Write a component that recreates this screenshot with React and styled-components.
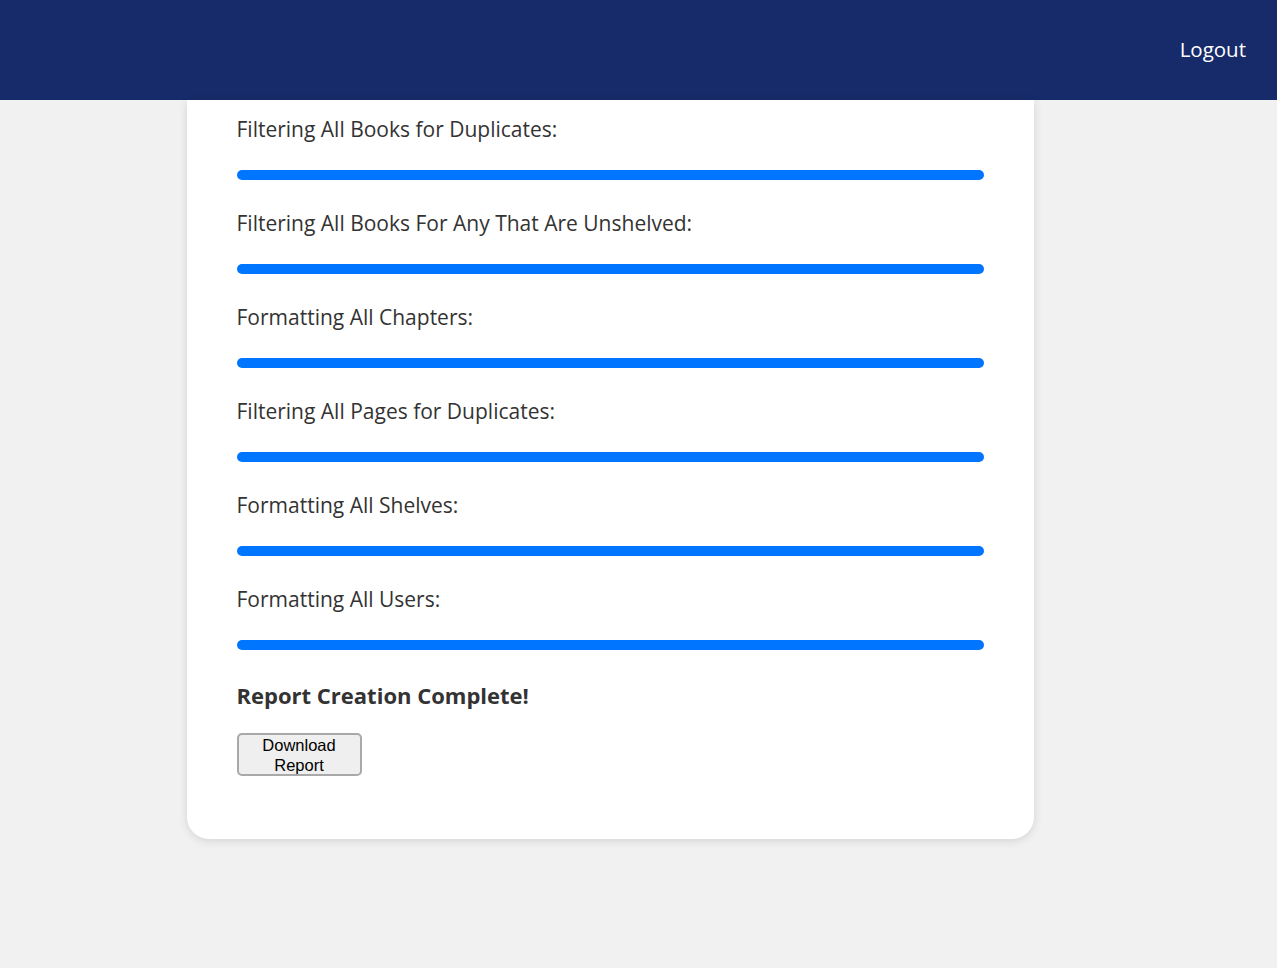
import React from "react";
import styled, { createGlobalStyle } from "styled-components";

const Global = createGlobalStyle`
  html, body { margin: 0; padding: 0; background: #f1f1f1; }
  body { font-family: "Open Sans", "Noto Sans", sans-serif; color: #333; }
`;

const Header = styled.header`
  height: 100px;
  background: #172b6a;
  display: flex;
  align-items: center;
  justify-content: flex-end;
  padding: 0 31px 2px;
  box-sizing: border-box;
`;

const HeaderLink = styled.a`
  color: #fff;
  font-family: "Open Sans", sans-serif;
  font-size: 20.5px;
  text-decoration: none;
  cursor: pointer;
`;

const Main = styled.main`
  display: flex;
  justify-content: center;
  padding-bottom: 60px;
`;

const Card = styled.section`
  width: 847px;
  box-sizing: border-box;
  margin-left: -57px;
  background: #fff;
  border-radius: 0 0 22px 22px;
  box-shadow: 0 2px 10px rgba(0, 0, 0, 0.12);
  padding: 14px 50px 63px;
`;

const Step = styled.div`
  display: flex;
  flex-direction: column;
`;

const StepLabel = styled.div`
  font-size: 21px;
  line-height: 30px;
  color: #333;
  margin-bottom: 26px;
`;

const Bar = styled.div`
  height: 10px;
  border-radius: 5px;
  background: #0075ff;
  margin-bottom: 28px;
`;

const Done = styled.h3`
  margin: 1px 0 21px;
  font-size: 22px;
  line-height: 33px;
  font-weight: 700;
  color: #333;
`;

const Button = styled.button`
  width: 125px;
  height: 43px;
  box-sizing: border-box;
  font-family: "Liberation Sans", Arial, sans-serif;
  font-size: 16.5px;
  line-height: 19.5px;
  padding: 1px 6px 0;
  color: #000;
  background: #efefef;
  border: 2px solid #a9a9a9;
  border-radius: 5px;
  cursor: pointer;
`;

const steps = [
  "Filtering All Books for Duplicates:",
  "Filtering All Books For Any That Are Unshelved:",
  "Formatting All Chapters:",
  "Filtering All Pages for Duplicates:",
  "Formatting All Shelves:",
  "Formatting All Users:",
];

export default function App() {
  return (
    <>
      <Global />
      <Header>
        <HeaderLink>Logout</HeaderLink>
      </Header>
      <Main>
        <Card>
          {steps.map((s) => (
            <Step key={s}>
              <StepLabel>{s}</StepLabel>
              <Bar />
            </Step>
          ))}
          <Done>Report Creation Complete!</Done>
          <Button>Download Report</Button>
        </Card>
      </Main>
    </>
  );
}
